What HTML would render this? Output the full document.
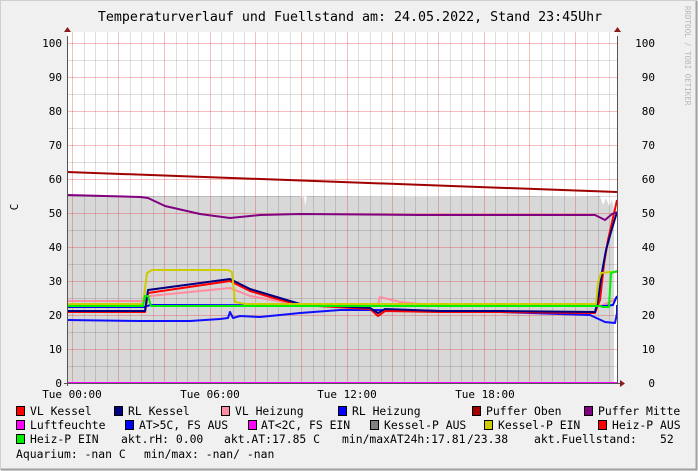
<!DOCTYPE html><html><head><meta charset="utf-8"><style>
html,body{margin:0;padding:0;background:#f0f0f0}
svg{display:block}
text{font-family:"DejaVu Sans Mono","Liberation Mono",monospace;fill:#000}
</style></head><body>
<svg width="698" height="471" xmlns="http://www.w3.org/2000/svg">
<rect x="0" y="0" width="698" height="471" fill="#f0f0f0"/>
<path d="M0.5 470V0.5H697" stroke="#cfcfcf" fill="none"/>
<path d="M1 469.5H696.5V1" stroke="#a0a0a0" stroke-width="2" fill="none"/>
<text x="350" y="21" font-size="13.3" text-anchor="middle">Temperaturverlauf und Fuellstand am: 24.05.2022, Stand 23:45Uhr</text>
<text transform="translate(685,6) rotate(90)" font-size="7.5" style="fill:#b8b8b8">RRDTOOL / TOBI OETIKER</text>
<text transform="translate(18,207) rotate(-90)" font-size="11" text-anchor="middle">C</text>
<rect x="67" y="32" width="550" height="351" fill="#fff"/>
<path d="M67 196 L300 196 L302 198 L304 196 L305 206 L307 196 L420 197 L530 196 L575 197 L600 196 L603 205 L606 198 L609 206 L612 200 L614 210 L614 383 L67 383Z" fill="#d8d8d8"/>
<g stroke-width="1">
<g stroke="#000" stroke-opacity="0.13">
<path d="M67.5 366.5H617M67.5 332.5H617M67.5 298.5H617M67.5 264.5H617M67.5 230.5H617M67.5 196.5H617M67.5 162.5H617M67.5 128.5H617M67.5 94.5H617M67.5 60.5H617"/>
<path d="M84.5 32V383M95.5 32V383M107.5 32V383M130.5 32V383M141.5 32V383M153.5 32V383M176.5 32V383M187.5 32V383M198.5 32V383M221.5 32V383M233.5 32V383M244.5 32V383M267.5 32V383M278.5 32V383M290.5 32V383M313.5 32V383M324.5 32V383M335.5 32V383M358.5 32V383M370.5 32V383M381.5 32V383M404.5 32V383M415.5 32V383M427.5 32V383M450.5 32V383M461.5 32V383M472.5 32V383M495.5 32V383M507.5 32V383M518.5 32V383M541.5 32V383M552.5 32V383M564.5 32V383M587.5 32V383M598.5 32V383M609.5 32V383"/>
</g>
<g stroke="#e0282a" stroke-opacity="0.3">
<path d="M67 349.5H617M67 315.5H617M67 281.5H617M67 247.5H617M67 213.5H617M67 179.5H617M67 145.5H617M67 111.5H617M67 77.5H617M67 43.5H617"/>
<path d="M72.5 32V383M118.5 32V383M164.5 32V383M210.5 32V383M255.5 32V383M301.5 32V383M347.5 32V383M392.5 32V383M438.5 32V383M484.5 32V383M529.5 32V383M575.5 32V383"/>
</g>
</g>
<g fill="none" stroke-width="2" stroke-linejoin="round">
<polyline stroke="#ff8ca0" points="67,301 145,301 150,296 230,288 250,296 300,305 378,305 380,297 400,302 440,306 600,306 605,304 614,300 617,297"/>
<polyline stroke="#1010ff" points="67,320 140,321 190,321 220,319 228,318 230,312 233,318 240,316 260,317 280,315 300,313 340,310 380,310 440,311 500,312 560,314 590,315 605,322 615,323 617,313 617,305"/>
<polyline stroke="#0000ff" points="67,307 145,307 150,305 600,306 605,306 613,305 617,296"/>
<polyline stroke="#ff0000" points="67,312 145,312 148,293 230,281 250,291 270,297 300,305 370,309 378,316 385,311 440,312 500,312 595,313 600,300 604,264 608,240 613,218 617,200"/>
<polyline stroke="#000080" points="67,311 145,311 148,290 230,279 250,289 270,295 300,304 370,308 378,313 385,309 440,311 500,311 595,312 598,300 602,272 606,250 611,232 617,212"/>
<polyline stroke="#cccc00" points="67,304 143,304 147,273 152,270 228,270 232,272 235,302 245,304 596,304 598,283 601,273 610,272 617,272"/>
<polyline stroke="#00ee00" points="67,306 143,306 145,296 148,296 151,306 600,306 603,307 609,307 611,273 617,271"/>
<polyline stroke="#a00000" points="67,172 617,192"/>
<polyline stroke="#800080" points="67,195 140,197 148,198 165,206 200,214 230,218 260,215 300,214 420,215 595,215 605,220 612,214 617,212"/>
<polyline stroke="#ff00ff" points="67,383 617,383"/>
</g>
<path d="M67.5 36V386M64 383.5H620" stroke="#555" fill="none"/>
<path d="M617.5 36V383" stroke="#555"/>
<path d="M64 32L67.5 27L71 32Z" fill="#8b1a1a"/>
<path d="M614 32L617.5 27L621 32Z" fill="#8b1a1a"/>
<path d="M620 380L625 383.5L620 387Z" fill="#8b1a1a"/>
<g font-size="11" text-anchor="end">
<text x="62" y="47">100</text><text x="62" y="81">90</text><text x="62" y="115">80</text><text x="62" y="149">70</text><text x="62" y="183">60</text><text x="62" y="217">50</text><text x="62" y="251">40</text><text x="62" y="285">30</text><text x="62" y="319">20</text><text x="62" y="353">10</text><text x="62" y="387">0</text>
<text x="655" y="47">100</text><text x="655" y="81">90</text><text x="655" y="115">80</text><text x="655" y="149">70</text><text x="655" y="183">60</text><text x="655" y="217">50</text><text x="655" y="251">40</text><text x="655" y="285">30</text><text x="655" y="319">20</text><text x="655" y="353">10</text><text x="655" y="387">0</text>
</g>
<g font-size="11" text-anchor="middle">
<text x="72" y="398">Tue 00:00</text><text x="210" y="398">Tue 06:00</text><text x="347" y="398">Tue 12:00</text><text x="485" y="398">Tue 18:00</text>
</g>
<g stroke="#000" stroke-width="1">
<rect x="16.5" y="406.5" width="8" height="9" fill="#ff0000"/>
<rect x="114.5" y="406.5" width="8" height="9" fill="#000080"/>
<rect x="221.5" y="406.5" width="8" height="9" fill="#ff8ca0"/>
<rect x="338.5" y="406.5" width="8" height="9" fill="#0000ff"/>
<rect x="472.5" y="406.5" width="8" height="9" fill="#a00000"/>
<rect x="584.5" y="406.5" width="8" height="9" fill="#800080"/>
<rect x="16.5" y="420.5" width="8" height="9" fill="#ff00ff"/>
<rect x="125.5" y="420.5" width="8" height="9" fill="#0000ff"/>
<rect x="248.5" y="420.5" width="8" height="9" fill="#ff00ff"/>
<rect x="370.5" y="420.5" width="8" height="9" fill="#808080"/>
<rect x="484.5" y="420.5" width="8" height="9" fill="#cccc00"/>
<rect x="598.5" y="420.5" width="8" height="9" fill="#ff0000"/>
<rect x="16.5" y="434.5" width="8" height="9" fill="#00ee00"/>
</g>
<g font-size="11.4">
<text x="30" y="415">VL Kessel</text><text x="128" y="415">RL Kessel</text><text x="235" y="415">VL Heizung</text><text x="352" y="415">RL Heizung</text><text x="486" y="415">Puffer Oben</text><text x="598" y="415">Puffer Mitte</text>
<text x="30" y="429">Luftfeuchte</text><text x="139" y="429">AT&gt;5C, FS AUS</text><text x="261" y="429">AT&lt;2C, FS EIN</text><text x="384" y="429">Kessel-P AUS</text><text x="498" y="429">Kessel-P EIN</text><text x="612" y="429">Heiz-P AUS</text>
<text x="30" y="443">Heiz-P EIN</text><text x="121" y="443">akt.rH: 0.00</text><text x="224" y="443">akt.AT:17.85 C</text><text x="342" y="443">min/maxAT24h:17.81</text><text x="467" y="443">/23.38</text><text x="534" y="443">akt.Fuellstand:</text><text x="660" y="443">52</text>
<text x="16" y="458">Aquarium: -nan C</text><text x="144" y="458">min/max: -nan/ -nan</text>
</g>
</svg>
</body></html>
